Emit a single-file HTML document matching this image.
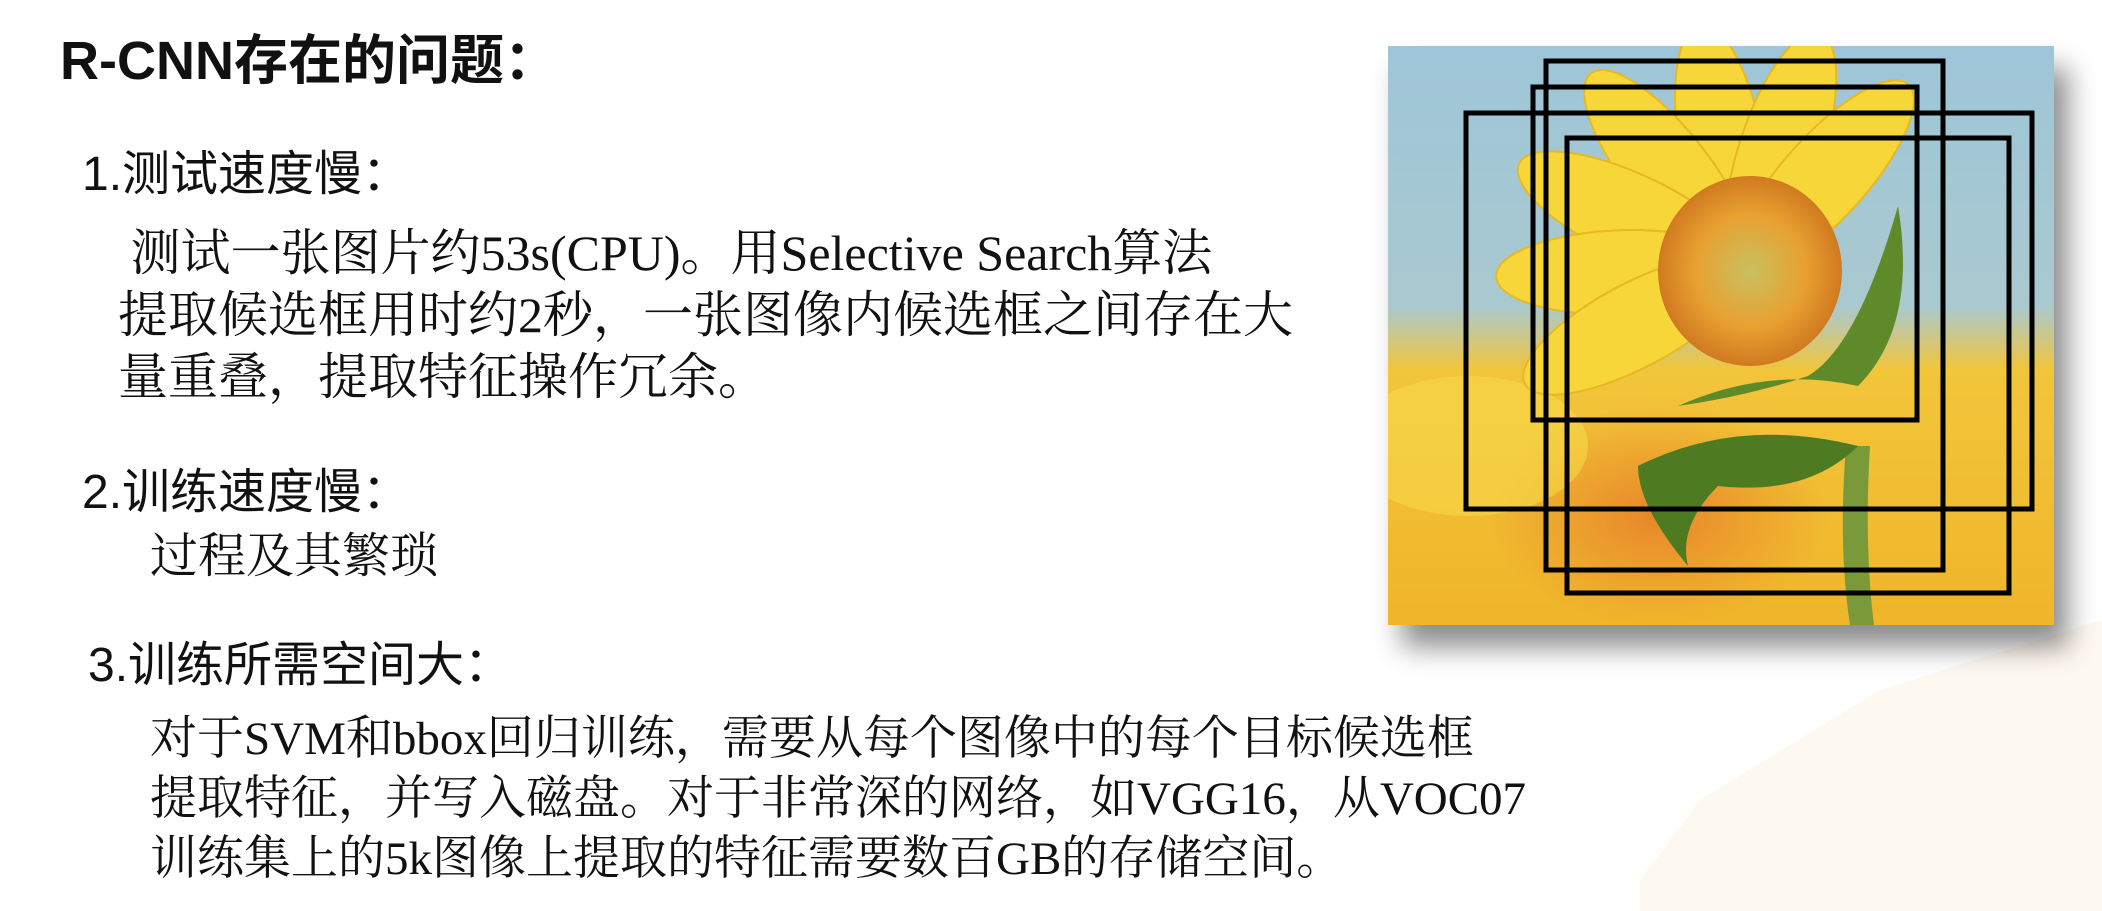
<!DOCTYPE html>
<html><head><meta charset="utf-8"><style>
html,body{margin:0;padding:0;background:#fff;}
body{width:2102px;height:911px;position:relative;overflow:hidden;}
.t{position:absolute;white-space:nowrap;color:#111;}
.h{font-family:"Liberation Sans","Noto Sans CJK SC",sans-serif;}
.s{font-family:"Liberation Serif","Noto Serif CJK SC",serif;}
</style></head><body>
<svg style="position:absolute;left:0;top:0" width="2102" height="911">
<polygon points="1640,880 1700,800 1880,690 2102,620 2102,911 1640,911" fill="#fdf3e2" opacity="0.5"/>
</svg>
<div class="t h" style="left:60px;top:30px;font-size:54px;font-weight:bold;line-height:62px;">R-CNN存在的问题：</div>
<div class="t h" style="left:82px;top:145px;font-size:48px;line-height:60px;">1.测试速度慢：</div>
<div class="t s" style="left:118px;top:222px;font-size:50px;line-height:62px;">&nbsp;测试一张图片约53s(CPU)。用Selective Search算法<br>提取候选框用时约2秒，一张图像内候选框之间存在大<br>量重叠，提取特征操作冗余。</div>
<div class="t h" style="left:82px;top:463px;font-size:48px;line-height:60px;">2.训练速度慢：</div>
<div class="t s" style="left:150px;top:527px;font-size:48px;line-height:60px;">过程及其繁琐</div>
<div class="t h" style="left:88px;top:636px;font-size:48px;line-height:60px;">3.训练所需空间大：</div>
<div class="t s" style="left:150px;top:709px;font-size:47px;line-height:60px;">对于SVM和bbox回归训练，需要从每个图像中的每个目标候选框<br>提取特征，并写入磁盘。对于非常深的网络，如VGG16，从VOC07<br>训练集上的5k图像上提取的特征需要数百GB的存储空间。</div>
<div style="position:absolute;left:1388px;top:46px;width:666px;height:579px;box-shadow:14px 22px 26px rgba(0,0,0,0.45);"></div>
<svg style="position:absolute;left:1388px;top:46px" width="666" height="579" viewBox="0 0 666 579">
<defs>
<linearGradient id="bg" x1="0" y1="0" x2="0" y2="1">
<stop offset="0" stop-color="#9ec6d8"/><stop offset="0.45" stop-color="#a9c9cf"/><stop offset="0.56" stop-color="#f2c53a"/><stop offset="1" stop-color="#f0b52a"/></linearGradient>
<radialGradient id="or" cx="0.5" cy="0.5" r="0.5"><stop offset="0" stop-color="#e8862a"/><stop offset="1" stop-color="#e8862a" stop-opacity="0"/></radialGradient>
<radialGradient id="ce" cx="0.5" cy="0.5" r="0.5"><stop offset="0" stop-color="#c9c060"/><stop offset="0.6" stop-color="#e8a030"/><stop offset="1" stop-color="#d07a20"/></radialGradient>
</defs>
<rect width="666" height="579" fill="url(#bg)"/>
<ellipse cx="270" cy="470" rx="170" ry="110" fill="url(#or)"/>
<ellipse cx="80" cy="400" rx="120" ry="70" fill="#f6d84a" opacity="0.6"/>
<g fill="#f7d63a" stroke="#e8b820" stroke-width="2">
<ellipse cx="355" cy="100" rx="42" ry="125" transform="rotate(-10 355 222)"/>
<ellipse cx="355" cy="100" rx="42" ry="125" transform="rotate(-38 355 222)"/>
<ellipse cx="355" cy="100" rx="42" ry="125" transform="rotate(-65 355 222)"/>
<ellipse cx="355" cy="100" rx="42" ry="125" transform="rotate(-92 355 222)"/>
<ellipse cx="355" cy="100" rx="42" ry="125" transform="rotate(-118 355 222)"/>
<ellipse cx="355" cy="100" rx="42" ry="125" transform="rotate(18 355 222)"/>
<ellipse cx="355" cy="100" rx="42" ry="125" transform="rotate(42 355 222)"/>
</g>
<path d="M458 400 Q450 500 462 579 L486 579 Q476 500 482 400Z" fill="#7a9a3a"/>
<path d="M290 360 Q380 320 470 340 Q530 280 510 160 Q470 300 420 330 Q360 350 290 360Z" fill="#5e8a2a"/>
<path d="M250 420 Q350 370 470 400 Q420 450 330 440 Q290 480 300 520 Q250 460 250 420Z" fill="#4e7a22"/>
<ellipse cx="362" cy="225" rx="92" ry="95" fill="url(#ce)"/>
</svg>
<svg style="position:absolute;left:0;top:0" width="2102" height="911">
<g fill="none" stroke="#000" stroke-width="5">
<rect x="1546" y="61" width="397" height="509"/>
<rect x="1533" y="87" width="384" height="333"/>
<rect x="1466" y="113" width="566" height="396"/>
<rect x="1567" y="138" width="442" height="455"/>
</g>
</svg>
</body></html>
